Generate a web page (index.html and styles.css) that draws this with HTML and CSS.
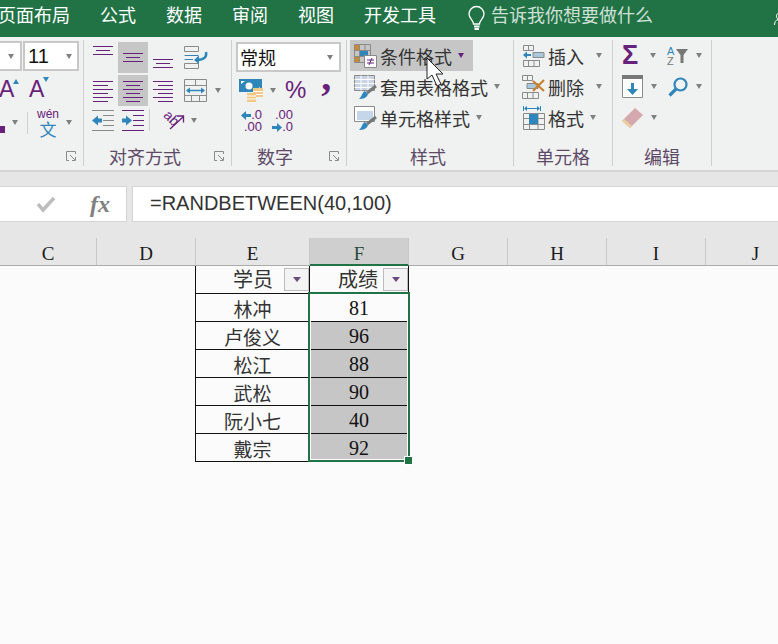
FILE: index.html
```html
<!DOCTYPE html>
<html lang="zh-CN">
<head>
  <meta charset="UTF-8" />
  <title>条件格式</title>
  <link rel="stylesheet" href="styles.css">
</head>
<body>
  <div class="tabs">
    <span class="tab first">页面布局</span>
    <span class="tab">公式</span>
    <span class="tab">数据</span>
    <span class="tab">审阅</span>
    <span class="tab">视图</span>
    <span class="tab">开发工具</span>
    <svg class="bulb" width="20" height="26" viewBox="0 0 20 26" fill="none" stroke="#fff" stroke-width="1.3"><path d="M6.5 18c0-4-4.500-5.500-4.500-10a7.500 7.500 0 0 1 15 0c0 4.500-4.500 6-4.500 10z"/><path d="M7 20.500h5.500M7.500 23h4.500" stroke-width="2"/></svg>
    <span class="tell-me">告诉我你想要做什么</span>
    <svg class="account" width="4" height="12" viewBox="0 0 4 12" fill="none" stroke="#fff"><path d="M4 .5C2 1 2 5 4 6M.5 12c0-3 1.500-5 3.500-5.500"/></svg>
  </div>

  <div class="ribbon">
    <section class="group font-group">
      <div class="group-body">
        <div class="row font-row-1">
          <div class="combo font-name"><span class="caret"></span></div>
          <div class="combo font-size"><span class="combo-text">11</span><span class="caret"></span></div>
        </div>
        <div class="row font-row-2">
          <span class="big-a first-a">A</span><span class="tri-up"></span>
          <span class="big-a second-a">A</span><span class="tri-down"></span>
        </div>
        <div class="row font-row-3">
          <span class="purple-box"></span><span class="caret caret-a"></span>
          <span class="vsep"></span>
          <span class="wen"><span class="wen-top">wén</span><span class="wen-bottom">文</span></span>
          <span class="caret caret-b"></span>
        </div>
      </div>
      <div class="group-label launched"><span></span><span></span>
        <svg class="launcher" width="10" height="10" viewBox="0 0 10 10" fill="none" stroke="#8a8a8a"><path d="M9.500 3V.5H.5v9H3"/><path d="M4 4l5 5M9.500 6v3.500H6"/></svg>
      </div>
    </section>

    <section class="group align-group">
      <div class="group-body">
        <div class="row align-row">
          <span class="tool"><svg width="20" height="12" viewBox="0 0 20 12" class="up-a" stroke="#68217a"><path d="M0 1.500h20M3 5.500h14M0 9.500h20"/></svg></span>
          <span class="tool on"><svg width="20" height="12" viewBox="0 0 20 12" stroke="#68217a"><path d="M0 1.500h20M3 5.500h14M0 9.500h20"/></svg></span>
          <span class="tool"><svg width="20" height="12" viewBox="0 0 20 12" class="down-a" stroke="#68217a"><path d="M0 1.500h20M3 5.500h14M0 9.500h20"/></svg></span>
          <svg class="wrap-icon" width="24" height="23" viewBox="0 0 24 23" fill="none"><path d="M.5 .5h14v5H.5zM.5 9.500h14M.5 13.500h8M.5 17.500h14v5H.5z" stroke="#8a8a8a"/><path d="M1 9.500h13M1 13.500h8" stroke="#2e86bb"/><path d="M22 6c1 5-2 8-9 8" stroke="#2e86bb" stroke-width="2.500"/><path d="M15 9.500l-5 4.500 5 4z" fill="#2e86bb"/></svg>
        </div>
        <div class="row align-row second">
          <span class="tool"><svg width="20" height="22" viewBox="0 0 20 22" stroke="#68217a"><path d="M0 1.500h20M0 5.500h15M0 9.500h20M0 13.500h15M0 17.500h20M0 21.500h15"/></svg></span>
          <span class="tool on"><svg width="20" height="22" viewBox="0 0 20 22" stroke="#68217a"><path d="M0 1.500h20M3 5.500h14M0 9.500h20M3 13.500h14M0 17.500h20M3 21.500h14"/></svg></span>
          <span class="tool"><svg width="20" height="22" viewBox="0 0 20 22" stroke="#68217a"><path d="M0 1.500h20M5 5.500h15M0 9.500h20M5 13.500h15M0 17.500h20M5 21.500h15"/></svg></span>
          <svg class="merge-icon" width="23" height="23" viewBox="0 0 23 23" fill="none" stroke="#8a8a8a"><path d="M.5 .5h22v22H.5zM.5 6.500h22M.5 16.500h22M11.500 .5v6M7.500 16.500v6M15.500 16.500v6"/><path d="M3 11.500h17" stroke="#2e86bb" stroke-width="1.500"/><path d="M2 11.500l4-3v6zM21 11.500l-4-3v6z" fill="#2e86bb" stroke="none"/></svg>
          <span class="caret merge-caret"></span>
        </div>
        <div class="row align-row third">
          <span class="tool low"><svg width="22" height="21" viewBox="0 0 22 21" fill="none"><path d="M0 .5h22M0 20.500h22M11 5.500h11M11 10.500h11M11 15.500h11" stroke="#8a8a8a"/><path d="M0 10.500l6-5v3h4v4H6v3z" fill="#2e86bb"/></svg></span>
          <span class="tool low"><svg width="22" height="21" viewBox="0 0 22 21" fill="none"><path d="M0 .5h22M0 20.500h22M11 5.500h11M11 10.500h11M11 15.500h11" stroke="#68217a"/><path d="M10 10.500l-6-5v3H0v4h4v3z" fill="#2e86bb"/></svg></span>
          <span class="vsep align-sep"></span>
          <svg class="orient-icon" width="22" height="22" viewBox="0 0 22 22" fill="none"><text x="0" y="12" transform="rotate(45 6 9)" class="orient-text">ab</text><path d="M7 20L20 8M14 7h6.500v6.500" stroke="#68217a" stroke-width="1.300"/></svg>
          <span class="caret orient-caret"></span>
        </div>
      </div>
      <div class="group-label launched"><span></span><span>对齐方式</span>
        <svg class="launcher" width="10" height="10" viewBox="0 0 10 10" fill="none" stroke="#8a8a8a"><path d="M9.500 3V.5H.5v9H3"/><path d="M4 4l5 5M9.500 6v3.500H6"/></svg>
      </div>
    </section>

    <section class="group number-group">
      <div class="group-body">
        <div class="combo number-format"><span class="combo-text">常规</span><span class="caret"></span></div>
        <div class="row number-row-2">
          <svg width="24" height="23" viewBox="0 0 24 23"><path d="M0 0h23v13H0z" fill="#2e86bb"/><circle cx="10" cy="7" r="3.500" fill="#fff"/><path d="M2 2h4l-4 3zM21 11h-4l4-3z" fill="#fff"/><path d="M14 9h10v9H14z" fill="#f0c987"/><path d="M14 12.500h10M14 15.500h10" stroke="#fff"/><path d="M8 14h9v9H8z" fill="#f0c987"/><path d="M8 17h9M8 20h9" stroke="#fff"/></svg>
          <span class="caret money-caret"></span>
          <span class="percent">%</span>
          <span class="comma">,</span>
        </div>
        <div class="row number-row-3">
          <div class="dec first-dec">
            <span class="dec-line"><svg width="10" height="9" viewBox="0 0 10 9" fill="#2e86bb"><path d="M0 4.500L5 0v3h5v3H5v3z"/></svg>.0</span>
            <span class="dec-line">.00</span>
          </div>
          <div class="dec">
            <span class="dec-line">.00</span>
            <span class="dec-line"><svg width="10" height="9" viewBox="0 0 10 9" fill="#2e86bb"><path d="M10 4.500L5 0v3H0v3h5v3z"/></svg>.0</span>
          </div>
        </div>
      </div>
      <div class="group-label launched"><span></span><span>数字</span>
        <svg class="launcher" width="10" height="10" viewBox="0 0 10 10" fill="none" stroke="#8a8a8a"><path d="M9.500 3V.5H.5v9H3"/><path d="M4 4l5 5M9.500 6v3.500H6"/></svg>
      </div>
    </section>

    <section class="group styles-group">
      <div class="group-body">
        <div class="cmd active">
          <svg width="23" height="24" viewBox="0 0 23 24" fill="none"><path d="M.5 .5h16v18H.5zM.5 6.500h16M.5 12.500h16M5.500 .5v18M11 .5v18" stroke="#8a8a8a"/><path d="M1 1h4v5H1zM1 13h4v5H1z" fill="#c98a2e"/><path d="M6 7h8v5H6z" fill="#2e86bb"/><path d="M10.500 11.500h12v12h-12z" fill="#fff" stroke="#8a8a8a"/><path d="M13 16h7M13 19h7M18 14l-3 7" stroke="#68217a"/></svg>
          <span class="cmd-text">条件格式</span><span class="caret purple"></span>
        </div>
        <div class="cmd">
          <svg width="23" height="24" viewBox="0 0 23 24" fill="none"><path d="M.5 .5h20v15H.5z" fill="#c9d3e3" stroke="#8a8a8a"/><path d="M.5 4.500h20M.5 8.500h20M.5 12.500h20M7 .5v15M14 .5v15" stroke="#fff"/><path d="M22 11l-9 7" stroke="#777" stroke-width="3"/><path d="M5 24c4 0 8-1 9-5l-3-3c-3 1-3 6-6 8z" fill="#2e86bb"/></svg>
          <span class="cmd-text">套用表格格式</span><span class="caret"></span>
        </div>
        <div class="cmd">
          <svg width="23" height="24" viewBox="0 0 23 24" fill="none"><path d="M.5 .5h20v15H.5z" fill="#fff" stroke="#8a8a8a"/><path d="M3 5h16v9H3z" fill="#c5d5ea"/><path d="M22 11l-9 7" stroke="#777" stroke-width="3"/><path d="M5 24c4 0 8-1 9-5l-3-3c-3 1-3 6-6 8z" fill="#2e86bb"/></svg>
          <span class="cmd-text">单元格样式</span><span class="caret"></span>
        </div>
      </div>
      <div class="group-label styles-label"><span></span><span>样式</span><span></span></div>
    </section>

    <section class="group cells-group">
      <div class="group-body">
        <div class="cmd">
          <svg width="22" height="22" viewBox="0 0 22 22" fill="none"><path d="M.5 .5h10v5H.5zM.5 15.500h16v6H.5zM.5 15.500h16M5.500 .5v5M5.500 15.500v6M11 15.500v6" stroke="#8a8a8a"/><path d="M10 7.500h11v5H10z" fill="#a9c7dd" stroke="#8a8a8a"/><path d="M1 10h7" stroke="#2e86bb" stroke-width="2"/><path d="M0 10l4-3.500v7z" fill="#2e86bb"/></svg>
          <span class="cmd-text">插入</span><span class="caret"></span>
        </div>
        <div class="cmd">
          <svg width="24" height="24" viewBox="0 0 24 24" fill="none"><path d="M.5 .5h10v5H.5zM.5 17.500h16v6H.5zM5.500 .5v5M5.500 17.500v6M11 17.500v6" stroke="#8a8a8a"/><path d="M5 8.500h11v5H5z" fill="#a9c7dd" stroke="#8a8a8a"/><path d="M11 6l11 10M22 5L11 16" stroke="#c8812f" stroke-width="2.200"/></svg>
          <span class="cmd-text">删除</span><span class="caret"></span>
        </div>
        <div class="cmd format-cmd">
          <svg width="22" height="24" viewBox="0 0 22 24" fill="none"><path d="M.5 0v5M17.500 0v5M3 2.500h12" stroke="#2e86bb"/><path d="M1 2.500l3-2.500v5zM17 2.500l-3-2.500v5z" fill="#2e86bb"/><path d="M.5 7.500h21v16H.5zM.5 12.500h21M.5 18.500h21M6.500 7.500v16M15 7.500v16" stroke="#8a8a8a"/><path d="M6 8h9v10H6z" fill="#2e86bb"/></svg>
          <span class="cmd-text">格式</span><span class="caret"></span>
        </div>
      </div>
      <div class="group-label"><span></span><span>单元格</span><span></span></div>
    </section>

    <section class="group edit-group">
      <div class="group-body">
        <div class="row edit-row">
          <span class="sigma">Σ</span><span class="caret"></span>
          <svg class="sort-icon" width="21" height="20" viewBox="0 0 21 20"><text x="0" y="9" class="sort-a">A</text><text x="0" y="19" class="sort-z">Z</text><path d="M9 3h12l-4.500 6v8h-3V9z" fill="#777"/></svg>
          <span class="caret"></span>
        </div>
        <div class="row edit-row">
          <svg class="fill-icon" width="21" height="23" viewBox="0 0 21 23"><path d="M.5 .5h20v22H.5z" fill="#fff" stroke="#8a8a8a"/><path d="M0 0h21v4H0z" fill="#777"/><path d="M9 8h3v6h4l-5.500 6L5 14h4z" fill="#2e86bb"/></svg>
          <span class="caret"></span>
          <svg class="find-icon" width="20" height="20" viewBox="0 0 20 20" fill="none" stroke="#2e86bb"><circle cx="12.500" cy="7.500" r="6" stroke-width="2.200"/><path d="M8 12l-6.500 6.500" stroke-width="3.200"/></svg>
          <span class="caret"></span>
        </div>
        <div class="row edit-row third">
          <svg width="21" height="20" viewBox="0 0 21 20"><path d="M0 13L13 0l8 7L8 20z" fill="#d4a8ac"/><path d="M0 13l8 7 2-2-8-7z" fill="#eecf9f"/></svg>
          <span class="caret"></span>
        </div>
      </div>
      <div class="group-label"><span></span><span>编辑</span><span></span></div>
    </section>
  </div>

  <div class="formula-band">
    <div class="name-box">
      <svg class="check" width="20" height="16" viewBox="0 0 20 16" fill="none" stroke="#bdbdbd" stroke-width="3.500"><path d="M2 8l5 6L18 2"/></svg>
      <span class="fx">fx</span>
    </div>
    <div class="formula-input">=RANDBETWEEN(40,100)</div>
  </div>

  <div class="col-heads">
    <span class="col c">C</span>
    <span class="col">D</span>
    <span class="col e">E</span>
    <span class="col f">F</span>
    <span class="col">G</span>
    <span class="col">H</span>
    <span class="col">I</span>
    <span class="col last">J</span>
  </div>

  <main class="sheet">
    <div class="table-wrap">
      <table class="scores">
        <tr class="head"><td class="name"><span class="head-text">学员</span><span class="filter"></span></td><td class="score"><span class="head-text">成绩</span><span class="filter"></span></td></tr>
        <tr><td class="name">林冲</td><td class="score">81</td></tr>
        <tr><td class="name">卢俊义</td><td class="score hit">96</td></tr>
        <tr><td class="name">松江</td><td class="score hit">88</td></tr>
        <tr><td class="name">武松</td><td class="score hit">90</td></tr>
        <tr><td class="name">阮小七</td><td class="score hit">40</td></tr>
        <tr><td class="name">戴宗</td><td class="score hit">92</td></tr>
      </table>
      <div class="selection"><span class="handle"></span></div>
    </div>
  </main>

  <svg class="pointer" width="22" height="32" viewBox="0 0 22 32"><path d="M1 1v21l5-4 5 11 4-2-5-10h7z" fill="#fff" stroke="#222"/></svg>
</body>
</html>
```

FILE: styles.css
```css
* {
  margin: 0;
  padding: 0;
  box-sizing: border-box;
}

html, body {
  width: 778px;
  height: 644px;
  overflow: hidden;
  background: #fbfbfb;
  font-family: "Noto Sans CJK SC", "Liberation Sans", sans-serif;
}

body {
  position: relative;
}

svg {
  display: block;
  flex: none;
  overflow: visible;
}

/* tabs */
.tabs {
  height: 37px;
  background: #217346;
  color: #fff;
  display: flex;
  align-items: center;
  font-size: 18px;
  line-height: 28px;
  padding-bottom: 9px;
  white-space: nowrap;
}

.tab {
  margin-right: 30px;
}

.tab.first {
  margin-left: -2px;
}

.bulb {
  margin-left: 1px;
  margin-top: 9px;
}

.tell-me {
  margin-left: 4px;
  color: #cfe0d6;
}

.account {
  margin-left: auto;
  margin-top: 10px;
  margin-right: 0;
}

/* ribbon */
.ribbon {
  height: 133px;
  background: #f0f1f1;
  padding: 3px 0 4px;
  display: flex;
}

.group {
  height: 126px;
  border-right: 1px solid #cfcfcf;
  display: flex;
  flex-direction: column;
}

.font-group { width: 84px; }
.align-group { width: 148px; }
.number-group { width: 115px; }
.styles-group { width: 167px; }
.cells-group { width: 99px; }
.edit-group { width: 99px; }

.group-body {
  flex: 1;
}

.group-label {
  height: 23px;
  padding-top: 3px;
  display: grid;
  grid-template-columns: 1fr auto 1fr;
  align-items: center;
  font-size: 18px;
  line-height: 20px;
  color: #5d4a66;
}

.group-label.launched {
  grid-template-columns: 25px auto 1fr;
}

.group-label.styles-label {
  padding-right: 4px;
}

.launcher {
  justify-self: end;
  margin-right: 7px;
}

.row {
  display: flex;
  align-items: center;
}

.caret {
  display: block;
  flex: none;
  width: 0;
  height: 0;
  border-left: 3.5px solid transparent;
  border-right: 3.5px solid transparent;
  border-top: 5px solid #808080;
}

.caret.purple {
  border-top-color: #68217a;
}

.combo {
  height: 30px;
  background: #fff;
  border: 2px solid #c8c8c8;
  display: flex;
  align-items: center;
  justify-content: space-between;
  font-size: 18px;
  color: #111;
}

.combo-text {
  line-height: 26px;
}

/* font group */
.font-row-1 {
  margin-top: 1px;
}

.font-name {
  width: 24px;
  margin-left: -2px;
  border-left: none;
  justify-content: flex-end;
  padding-right: 6px;
}

.font-size {
  width: 56px;
  margin-left: 1px;
  padding: 0 5px 0 3px;
  font-family: "Liberation Sans", sans-serif;
  font-size: 20px;
}

.font-row-2 {
  height: 24px;
  margin-top: 6px;
  align-items: flex-end;
}

.big-a {
  font-family: "Liberation Sans", sans-serif;
  font-size: 23px;
  line-height: 24px;
  color: #68217a;
  width: 15px;
}

.first-a {
  margin-left: -1px;
}

.second-a {
  margin-left: 16px;
}

.tri-up, .tri-down {
  display: block;
  width: 0;
  height: 0;
  border-left: 3.5px solid transparent;
  border-right: 3.5px solid transparent;
  align-self: flex-start;
  margin-top: 2px;
}

.tri-up {
  border-bottom: 5px solid #2e86bb;
  margin-left: -1px;
  margin-right: -6px;
}

.tri-down {
  border-top: 5px solid #2e86bb;
  margin-left: -1px;
  margin-top: 0;
}

.font-row-3 {
  height: 27px;
  margin-top: 8px;
}

.purple-box {
  width: 5px;
  height: 7px;
  background: #68217a;
  margin-top: 14px;
}

.caret-a {
  margin-left: 7px;
}

.vsep {
  display: block;
  width: 1px;
  height: 22px;
  background: #cfcfcf;
}

.font-row-3 .vsep {
  margin-left: 9px;
}

.wen {
  width: 20px;
  margin-left: 10px;
  display: flex;
  flex-direction: column;
  align-items: center;
}

.wen-top {
  font-family: "Liberation Sans", sans-serif;
  font-size: 12px;
  line-height: 12px;
  color: #68217a;
}

.wen-bottom {
  font-size: 17px;
  line-height: 17px;
  color: #2e86bb;
}

.caret-b {
  margin-left: 8px;
}

/* alignment group */
.align-row {
  padding-left: 4px;
  margin-top: 2px;
}

.align-row.second {
  margin-top: 2px;
}

.align-row.third {
  margin-top: 1px;
}

.tool {
  width: 30px;
  height: 31px;
  display: flex;
  align-items: center;
  justify-content: center;
}

.tool.low {
  height: 26px;
}

.tool.on {
  background: #c6c6c6;
}

.up-a {
  transform: translateY(-7px);
}

.down-a {
  transform: translateY(6px);
}

.wrap-icon, .merge-icon {
  margin-left: 6px;
}

.merge-caret {
  margin-left: 8px;
}

.align-sep {
  margin-left: 1px;
}

.orient-icon {
  margin-left: 13px;
}

.orient-text {
  font-family: "Liberation Sans", sans-serif;
  font-size: 14px;
  fill: #68217a;
}

.orient-caret {
  margin-left: 6px;
}

/* number group */
.number-format {
  width: 105px;
  margin: 2px 0 0 4px;
  padding: 0 6px 0 2px;
}

.number-row-2 {
  height: 26px;
  margin-top: 5px;
  padding-left: 7px;
}

.money-caret {
  margin-left: 7px;
}

.percent {
  font-family: "Liberation Sans", sans-serif;
  font-size: 24px;
  line-height: 26px;
  color: #68217a;
  margin-left: 9px;
}

.comma {
  font-family: "Liberation Serif", serif;
  font-weight: bold;
  font-size: 40px;
  line-height: 26px;
  color: #68217a;
  margin-left: 15px;
  transform: translateY(-13px);
}

.number-row-3 {
  margin-top: 6px;
  padding-left: 8px;
  align-items: flex-start;
}

.dec {
  display: flex;
  flex-direction: column;
  align-items: flex-end;
  width: 22px;
  font-family: "Liberation Sans", sans-serif;
  font-size: 13px;
  line-height: 12px;
  color: #68217a;
}

.first-dec {
  margin-right: 9px;
}

.dec-line {
  display: flex;
  align-items: center;
  height: 12px;
}

/* command lists */
.cmd {
  height: 31px;
  display: flex;
  align-items: center;
  font-size: 18px;
  line-height: 26px;
  color: #333;
  white-space: nowrap;
  padding-left: 4px;
}

.cmd svg {
  margin-right: 3px;
}

.cmd .caret {
  margin-left: 6px;
}

.styles-group .cmd {
  margin-left: 3px;
}

.cmd.active {
  background: #c6c6c6;
  width: 123px;
}

.cells-group .cmd {
  padding-left: 8px;
}

.cells-group .cmd svg {
  width: 24px;
  margin-right: 2px;
}

.cells-group .cmd .caret {
  margin-left: 12px;
}

.cells-group .format-cmd .caret {
  margin-left: 6px;
}

/* editing group */
.edit-row {
  height: 31px;
  padding-left: 9px;
}

.edit-row .caret {
  margin-left: 8px;
}

.sigma {
  display: block;
  width: 20px;
  font-family: "Liberation Sans", sans-serif;
  font-weight: bold;
  font-size: 27px;
  line-height: 31px;
  color: #68217a;
}

.sort-icon {
  margin-left: 11px;
}

.find-icon {
  margin-left: 11px;
}

.sort-a, .sort-z {
  font-family: "Liberation Sans", sans-serif;
  font-size: 11px;
}

.sort-a { fill: #2e86bb; }
.sort-z { fill: #777; }

/* formula bar */
.formula-band {
  height: 68px;
  background: #e6e6e6;
  border-top: 2px solid #d4d4d4;
  padding-top: 14px;
  display: flex;
  gap: 5px;
}

.name-box {
  width: 127px;
  height: 36px;
  background: #fff;
  border: 1px solid #d4d4d4;
  border-left: none;
  display: flex;
  align-items: center;
}

.check {
  margin-left: 36px;
}

.fx {
  margin-left: 34px;
  font-family: "Liberation Serif", serif;
  font-style: italic;
  font-weight: bold;
  font-size: 24px;
  color: #808080;
}

.formula-input {
  flex: 1;
  height: 36px;
  background: #fff;
  border: 1px solid #d4d4d4;
  border-right: none;
  padding-left: 17px;
  font-family: "Liberation Sans", sans-serif;
  font-size: 20px;
  line-height: 33px;
  color: #333;
}

/* column headings */
.col-heads {
  height: 28px;
  background: #e6e6e6;
  border-bottom: 1px solid #ababab;
  display: flex;
}

.col {
  width: 99px;
  flex: none;
  height: 27px;
  border-right: 1px solid #c8c8c8;
  text-align: center;
  font-family: "Liberation Serif", serif;
  font-size: 19px;
  line-height: 31px;
  color: #1a1a1a;
}

.col.c { width: 97px; }
.col.e { width: 114px; }

.col.f {
  background: #cfcfcf;
  border-bottom: 2px solid #217346;
  height: 28px;
  color: #2a4a3a;
}

.col.last { border-right: none; }

/* table */
.sheet {
  padding-left: 195px;
}

.table-wrap {
  position: relative;
  width: 215px;
}

.scores {
  border-collapse: collapse;
  table-layout: fixed;
  width: 214px;
  font-size: 19px;
  color: #333;
}

.scores td {
  height: 28px;
  border: 1px solid #111;
  text-align: center;
  line-height: 23px;
  padding: 3px 0 0;
}

.scores .head td {
  height: 27px;
  border-top: none;
  text-align: right;
  font-size: 20px;
}

.name {
  width: 114px;
}

.score {
  width: 99px;
  font-family: "Liberation Serif", "Noto Sans CJK SC", serif;
  font-size: 20px;
  color: #111;
}

.head .score {
  font-family: "Noto Sans CJK SC", sans-serif;
  color: #333;
}

.hit {
  background: #c6c6c6;
}

.head td {
  position: relative;
}

.head-text {
  position: absolute;
  top: 1px;
}

.name .head-text { left: 37px; }
.score .head-text { left: 28px; }

.filter {
  position: absolute;
  right: 0;
  top: 2px;
  width: 25px;
  height: 23px;
  background: #f4f4f4;
  border: 1px solid #bcbcbc;
  display: flex;
  align-items: center;
  justify-content: center;
}

.filter::after {
  content: "";
  width: 0;
  height: 0;
  border-left: 4px solid transparent;
  border-right: 4px solid transparent;
  border-top: 5px solid #6d4a7c;
}

.selection {
  position: absolute;
  left: 113px;
  top: 26px;
  width: 102px;
  height: 170px;
  border: 2px solid #217346;
  box-shadow: inset 0 0 0 1px #fff;
  pointer-events: none;
}

.handle {
  position: absolute;
  right: -4px;
  bottom: -4px;
  width: 7px;
  height: 7px;
  background: #217346;
  box-shadow: 0 0 0 1px #fff;
}

.pointer {
  position: absolute;
  left: 426px;
  top: 57px;
}
```
